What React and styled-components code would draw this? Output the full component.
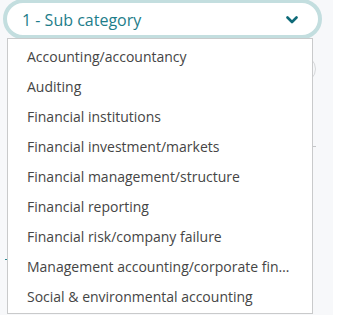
import React from "react";
import styled, { createGlobalStyle } from "styled-components";

const GlobalStyle = createGlobalStyle`
  body {
    margin: 0;
    background: #ffffff;
    font-family: "Open Sans", "Liberation Sans", sans-serif;
  }
`;

const Page = styled.div`
  position: relative;
  width: 333px;
  height: 315px;
  background: #f7f8fa;
  overflow: hidden;
`;

// faint bits of the form that sits behind the open dropdown
const Backdrop = styled.div`
  display: flex;
  flex-direction: column;
  width: 311px;
  padding: 55px 0 0 5px;
`;

const Ring = styled.div`
  align-self: flex-end;
  width: 26px;
  height: 26px;
  border: 1px solid #d6d8da;
  border-radius: 50%;
`;

const Rule = styled.div`
  align-self: flex-end;
  margin-top: 63px;
  width: 10px;
  border-top: 1px solid #c4c6c8;
`;

const Dash = styled.div`
  margin-top: 112px;
  width: 3px;
  border-top: 1px solid #2a8a92;
`;

const Select = styled.div`
  position: absolute;
  top: 0;
  left: 0;
  right: 0;
  padding: 0 11px 0 3px;
`;

const Trigger = styled.div`
  height: 40px;
  box-sizing: border-box;
  margin-top: -1px;
  display: flex;
  align-items: center;
  justify-content: space-between;
  padding: 1px 20px 0 15px;
  background: #ffffff;
  border: 4px solid #c3dedf;
  border-radius: 22px;
  color: #1d7d8a;
  font-size: 16px;
`;

const Chevron = styled.svg`
  width: 12px;
  height: 8px;
  color: #0e6a78;
`;

const Menu = styled.ul`
  position: absolute;
  top: 38px;
  left: 7px;
  width: 306px;
  box-sizing: border-box;
  margin: 0;
  padding: 3px 0 1px;
  list-style: none;
  background: #ffffff;
  border: 1px solid #c9cacb;
`;

const Item = styled.li`
  height: 30px;
  line-height: 30px;
  padding: 0 17px 0 19px;
  font-size: 14px;
  color: #454545;
  white-space: nowrap;
  overflow: hidden;
  text-overflow: ellipsis;
`;

const options = [
  "Accounting/accountancy",
  "Auditing",
  "Financial institutions",
  "Financial investment/markets",
  "Financial management/structure",
  "Financial reporting",
  "Financial risk/company failure",
  "Management accounting/corporate finance",
  "Social & environmental accounting",
];

const App = () => {
  return (
    <Page>
      <GlobalStyle />
      <Backdrop>
        <Ring />
        <Rule />
        <Dash />
      </Backdrop>
      <Select>
        <Trigger>
          <span>1 - Sub category</span>
          <Chevron viewBox="0 0 12 8">
            <path
              d="M1.5 1.5 L6 6 L10.5 1.5"
              fill="none"
              stroke="currentColor"
              strokeWidth="2.6"
              strokeLinecap="round"
              strokeLinejoin="round"
            />
          </Chevron>
        </Trigger>
        <Menu>
          {options.map((o) => (
            <Item key={o}>{o}</Item>
          ))}
        </Menu>
      </Select>
    </Page>
  );
};

export default App;
